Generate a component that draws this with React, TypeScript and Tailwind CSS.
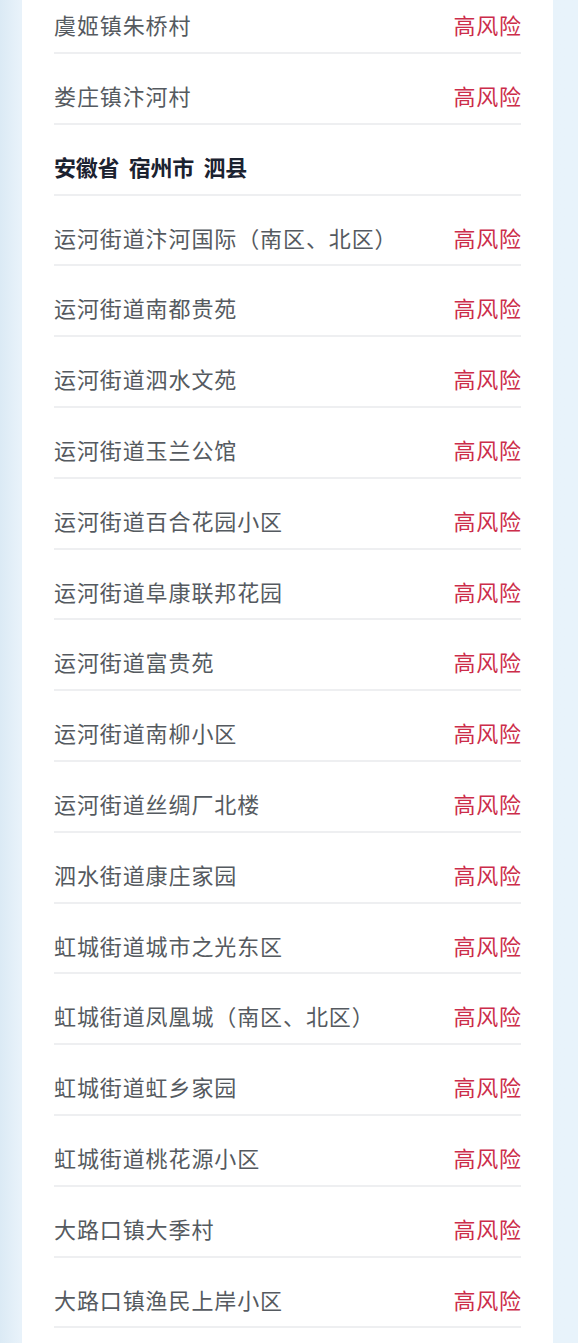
import React from 'react';

type Row = { name: string; level?: string; header?: boolean };

const rows: Row[] = [
  { name: '虞姬镇朱桥村', level: '高风险' },
  { name: '娄庄镇汴河村', level: '高风险' },
  { name: '安徽省 宿州市 泗县', header: true },
  { name: '运河街道汴河国际（南区、北区）', level: '高风险' },
  { name: '运河街道南都贵苑', level: '高风险' },
  { name: '运河街道泗水文苑', level: '高风险' },
  { name: '运河街道玉兰公馆', level: '高风险' },
  { name: '运河街道百合花园小区', level: '高风险' },
  { name: '运河街道阜康联邦花园', level: '高风险' },
  { name: '运河街道富贵苑', level: '高风险' },
  { name: '运河街道南柳小区', level: '高风险' },
  { name: '运河街道丝绸厂北楼', level: '高风险' },
  { name: '泗水街道康庄家园', level: '高风险' },
  { name: '虹城街道城市之光东区', level: '高风险' },
  { name: '虹城街道凤凰城（南区、北区）', level: '高风险' },
  { name: '虹城街道虹乡家园', level: '高风险' },
  { name: '虹城街道桃花源小区', level: '高风险' },
  { name: '大路口镇大季村', level: '高风险' },
  { name: '大路口镇渔民上岸小区', level: '高风险' },
];

const RiskRow = ({ row }: { row: Row }) => (
  <div className="h-[70.8px] flex flex-col">
    <div className="pt-[30px] flex items-center justify-between leading-[22px] text-[22px]">
      <span
        className={
          row.header
            ? 'font-bold text-[#1b2230] tracking-[-0.3px] [word-spacing:5px]'
            : 'text-[#555a60] tracking-[0.9px]'
        }
      >
        {row.name}
      </span>
      {row.level && <span className="text-[#cc2d4a] tracking-[0.7px] mr-[-0.7px]">{row.level}</span>}
    </div>
    <div className="mt-auto h-[2px] bg-[#eeeff1]" />
  </div>
);

export default function App() {
  return (
    <div
      className="w-[578px] h-[1343px] overflow-hidden flex bg-[linear-gradient(90deg,#dbeaf5_0px,#e8f2fa_20px,#e8f3fb_100%)]"
      style={{ fontFamily: '"Noto Sans CJK SC", "Noto Sans", sans-serif' }}
    >
      <div className="ml-[22px] w-[531px] bg-white px-[32px] flex flex-col">
        <div className="mt-[-16.8px]">
          {rows.map((r, i) => (
            <RiskRow key={i} row={r} />
          ))}
        </div>
      </div>
    </div>
  );
}
